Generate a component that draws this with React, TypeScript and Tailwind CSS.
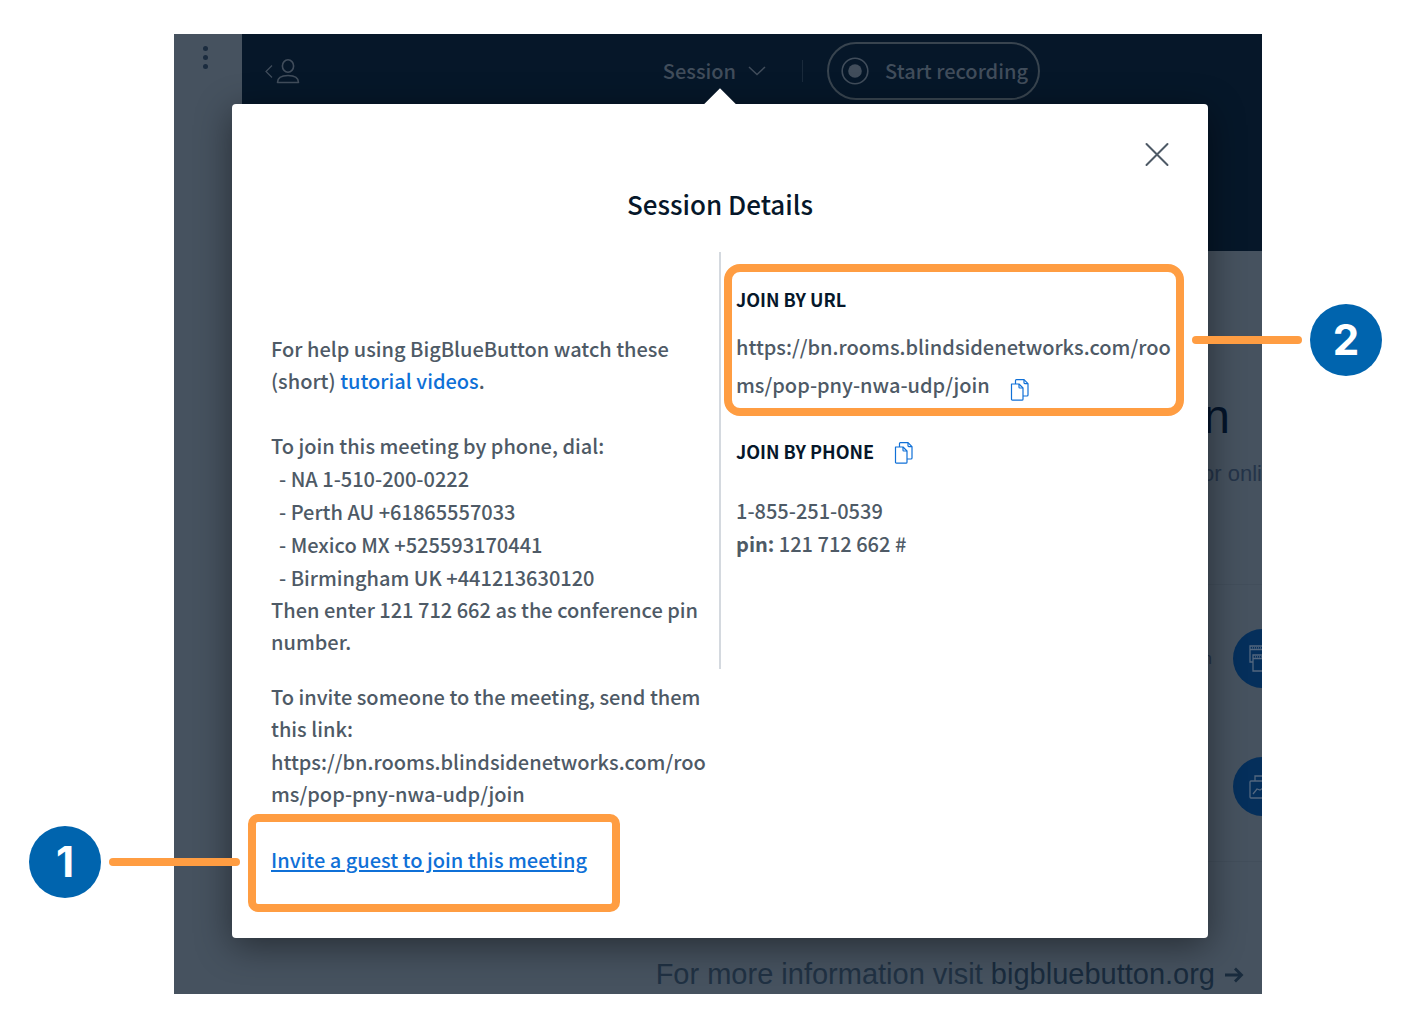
const phoneNumbers = [
  "NA 1-510-200-0222",
  "Perth AU +61865557033",
  "Mexico MX +525593170441",
  "Birmingham UK +441213630120",
];

const roomUrl = "https://bn.rooms.blindsidenetworks.com/rooms/pop-pny-nwa-udp/join";

function CopyButton({ label }: { label: string }) {
  return (
    <button type="button" aria-label={label} className="mt-1 inline-block align-middle text-[#1070d7]">
      <svg width="20" height="24" viewBox="0 0 20 24" fill="none" stroke="currentColor" strokeWidth="1.200" strokeLinejoin="round">
        <path d="M1.5 6h7.5l4 4v11.2q0 1-1 1h-9.5q-1 0-1-1z" />
        <path d="M9 6v3.200q0 .8.8.8H13" />
        <path d="M5.500 6V2.500q0-.9.900-.9H14l4 4V17q0 1-1 1h-4" />
        <path d="M14 1.800v3q0 .8.8.8H18" />
      </svg>
    </button>
  );
}

function Badge({ children }: { children: string }) {
  return (
    <span className="flex size-[72px] shrink-0 items-center justify-center rounded-full bg-[#0064ae] font-[Inter,sans-serif] text-[42px] leading-none font-bold text-white">
      {children}
    </span>
  );
}

function Connector({ className }: { className: string }) {
  return <span className={`h-2 shrink-0 rounded-full bg-[#ff9d42] ${className}`} />;
}

function Backdrop() {
  return (
    <div className="flex min-w-0 overflow-hidden bg-[#46525f] [grid-area:1/1]">
      {/* Sidebar */}
      <div className="w-[68px] shrink-0">
        <button type="button" aria-label="Options" className="mt-3 ml-[29px] flex flex-col gap-1 text-[#1b2c3f]">
          <span className="size-[5px] rounded-full bg-current" />
          <span className="size-[5px] rounded-full bg-current" />
          <span className="size-[5px] rounded-full bg-current" />
        </button>
      </div>

      <div className="flex min-w-0 flex-1 flex-col">
        {/* Navbar */}
        <header className="h-[217px] bg-[#061729] text-[20px] font-medium text-[#414d5b]">
          <div className="flex h-[74px] items-center pr-[222px] pl-[23px]">
            <button type="button" aria-label="Users" className="mr-auto">
              <svg width="36" height="26" viewBox="0 0 36 26" fill="none" stroke="currentColor" strokeWidth="1.600">
                <path d="M7 7.500L1 13.500L7 19.500" strokeWidth="1.200" />
                <ellipse cx="23" cy="8" rx="5.600" ry="6.200" />
                <path d="M12.500 24.500q0-7 10.500-7T33.500 24.500z" strokeLinejoin="round" />
              </svg>
            </button>
            <button type="button" className="flex items-center gap-3">
              Session
              <svg width="18" height="10" viewBox="0 0 18 10" fill="none" stroke="currentColor" strokeWidth="1.500">
                <path d="M1 1l8 7.500L17 1" />
              </svg>
            </button>
            <span className="mr-6 ml-9 h-[22px] w-px bg-[#1a2a3b]" />
            <button type="button" className="flex h-[58px] items-center rounded-full border-2 border-[#38444f] pr-[10px] pl-3">
              <svg width="28" height="28" viewBox="0 0 28 28" className="mr-4">
                <circle cx="14" cy="14" r="12.800" fill="none" stroke="currentColor" strokeWidth="1.600" />
                <circle cx="14" cy="14" r="6.800" fill="currentColor" />
              </svg>
              Start recording
            </button>
          </div>
        </header>

        {/* Presentation */}
        <div className="flex flex-1 flex-col items-end font-['Liberation_Sans',Arial,sans-serif]">
          <p className="mt-[142px] mr-8 text-[48px] leading-[48px] text-[#04142a]">n</p>
          <p className="mt-[21px] text-[22px] leading-6 whitespace-nowrap text-[#243449]">or onli</p>
          <div className="mt-[98px] flex h-[278px] w-full flex-col items-end gap-[69px] border-y border-[#424e5b] pt-11">
            <div className="-mr-[30px] flex items-center gap-[21px] text-[16px] text-[#243449]">
              n
              <svg width="59" height="59" viewBox="0 0 59 59" fill="none" stroke="#53677f" strokeWidth="1.300">
                <circle cx="29.500" cy="29.500" r="29.500" fill="#052f5b" stroke="none" />
                <path d="M20 33h-3V17h24v8M17 20.500h24" />
                <path d="M20 26h24v16H20zM20 29.500h24" />
                <path d="M19 18.800h20M22 27.800h20" strokeDasharray="1 1" />
              </svg>
            </div>
            <svg width="59" height="59" viewBox="0 0 59 59" fill="none" stroke="#53677f" strokeWidth="1.300" className="-mr-[30px]">
              <circle cx="29.500" cy="29.500" r="29.500" fill="#052f5b" stroke="none" />
              <rect x="17" y="24" width="25" height="17" rx="1" />
              <path d="M22 24v-5h15v5M20 37l4-5 3 1 5-3 4 4 4-3" />
            </svg>
          </div>
          <p className="mt-auto mr-[18px] mb-1 flex items-center gap-[9px] text-[29px] leading-8 whitespace-nowrap text-[#203143]">
            <span>
              For more information visit <a href="#bigbluebutton" className="text-[#192b3d]">bigbluebutton.org</a>
            </span>
            <svg width="20" height="18" viewBox="0 0 20 18" fill="none" stroke="#192b3d" strokeWidth="2.800">
              <path d="M1 10h16M11 3.500L17.500 10L11 16.500" />
            </svg>
          </p>
        </div>
      </div>
    </div>
  );
}

function SessionDetails() {
  return (
    <section
      role="dialog"
      aria-labelledby="session-title"
      className="relative mt-[70px] mr-[54px] mb-14 ml-[58px] min-w-0 rounded-[4px] bg-white text-[20px] leading-8 font-medium text-[#4e5a66] shadow-[0_8px_36px_rgba(0,0,0,0.45)] [grid-area:1/1]"
    >
      <span className="absolute -top-[11px] left-1/2 size-[23px] -translate-x-1/2 rotate-45 bg-white" />

      <div className="relative flex justify-end pt-[38px] pr-[38px]">
        <button type="button" aria-label="Close" className="text-[#4e5a66]">
          <svg width="26" height="26" viewBox="0 0 26 26" stroke="currentColor" strokeWidth="2" strokeLinecap="round">
            <path d="M2.500 2l21 21M23.500 2l-21 21" />
          </svg>
        </button>
      </div>

      <h1 id="session-title" className="mt-5 text-center text-[26px] font-medium text-[#06172a]">
        Session Details
      </h1>

      <div className="mt-8 grid grid-cols-2">
        {/* Welcome message */}
        <div className="pt-[81px] pr-2 pb-[11px] pl-[39px]">
          <p>
            For help using BigBlueButton watch these (short){" "}
            <a href="#tutorials" className="text-[#0f70d7]">tutorial videos</a>.
          </p>
          <p className="mt-[33px]">To join this meeting by phone, dial:</p>
          <ul className="pl-2 leading-[33px]">
            {phoneNumbers.map((number) => (
              <li key={number}>- {number}</li>
            ))}
          </ul>
          <p>Then enter 121 712 662 as the conference pin number.</p>
        </div>

        {/* Join options */}
        <div className="-ml-px border-l-2 border-[#d4d9df] pt-3 pr-6 pl-[3px]">
          <div className="relative">
            <div className="rounded-2xl border-8 border-[#ff9d42] pt-[11px] pr-1 pb-1 pl-1">
              <h2 className="text-[18px] font-bold text-[#06172a]">JOIN BY URL</h2>
              <p className="mt-[13px] leading-[38px] break-all">
                {roomUrl}
                <span className="ml-5">
                  <CopyButton label="Copy join URL" />
                </span>
              </p>
            </div>
            <div className="absolute top-10 left-full ml-2 flex items-center gap-2">
              <Connector className="w-[110px]" />
              <Badge>2</Badge>
            </div>
          </div>

          <div className="mt-[19px] pl-3">
            <h2 className="flex items-center gap-5 text-[18px] font-bold text-[#06172a]">
              JOIN BY PHONE
              <CopyButton label="Copy phone details" />
            </h2>
            <div className="mt-[27px] leading-[33px]">
              <p>1-855-251-0539</p>
              <p>
                <b>pin:</b> 121 712 662 #
              </p>
            </div>
          </div>
        </div>
      </div>

      {/* Invitation */}
      <div className="w-1/2 pt-3 pr-2 pl-[39px]">
        <p>To invite someone to the meeting, send them this link:</p>
        <p className="mt-px break-all">{roomUrl}</p>
      </div>
      <div className="relative mt-1 mb-[26px] ml-4 w-[372px]">
        <div className="rounded-[10px] border-8 border-[#ff9d42] px-[15px] pt-[22px] pb-7">
          <a href="#invite" className="whitespace-nowrap text-[#0f70d7] underline decoration-2 underline-offset-2">
            Invite a guest to join this meeting
          </a>
        </div>
        <div className="absolute top-3 right-full mr-2 flex items-center gap-2">
          <Badge>1</Badge>
          <Connector className="w-[131px]" />
        </div>
      </div>
    </section>
  );
}

export default function App() {
  return (
    <main className="grid min-h-screen overflow-hidden bg-white pt-[34px] pr-[154px] pb-7 pl-[174px] font-['Noto_Sans_CJK_SC',sans-serif]">
      <Backdrop />
      <SessionDetails />
    </main>
  );
}
